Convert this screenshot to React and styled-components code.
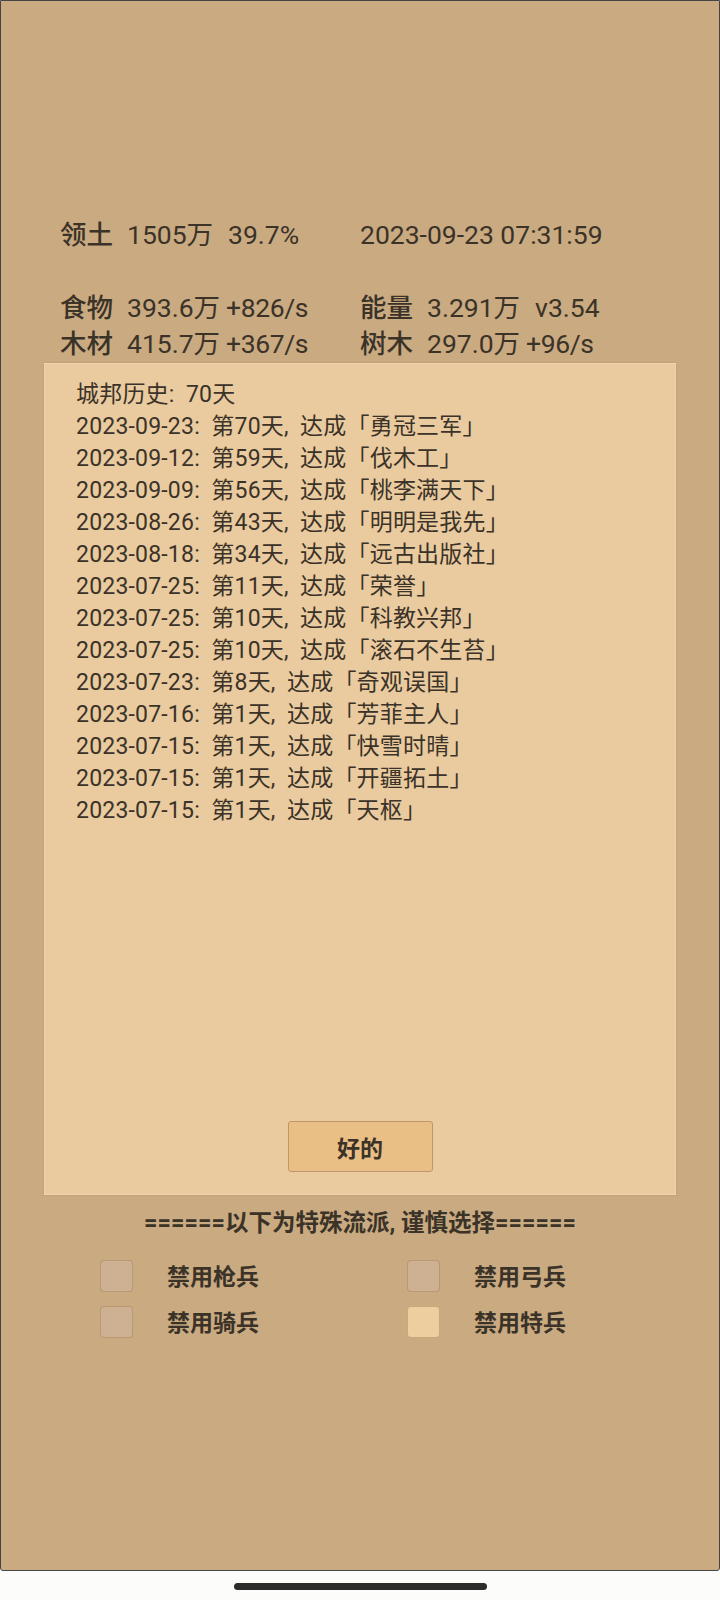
import React, { useState } from "react";
import styled, { createGlobalStyle } from "styled-components";

const GlobalStyle = createGlobalStyle`
  html, body {
    margin: 0;
    padding: 0;
    background: #fcfcfa;
  }
  body {
    font-family: Roboto, "Noto Sans CJK SC", sans-serif;
    color: #3b3228;
  }
  * {
    box-sizing: border-box;
  }
`;

// [label, value, extra, extra is a rate]
const stats = [
  [["领土", "1505万", "39.7%", false], ["2023-09-23 07:31:59"]],
  [
    ["食物", "393.6万", "+826/s", true],
    ["能量", "3.291万", "v3.54", false],
  ],
  [
    ["木材", "415.7万", "+367/s", true],
    ["树木", "297.0万", "+96/s", true],
  ],
];

const history = [
  ["2023-09-23", 70, "勇冠三军"],
  ["2023-09-12", 59, "伐木工"],
  ["2023-09-09", 56, "桃李满天下"],
  ["2023-08-26", 43, "明明是我先"],
  ["2023-08-18", 34, "远古出版社"],
  ["2023-07-25", 11, "荣誉"],
  ["2023-07-25", 10, "科教兴邦"],
  ["2023-07-25", 10, "滚石不生苔"],
  ["2023-07-23", 8, "奇观误国"],
  ["2023-07-16", 1, "芳菲主人"],
  ["2023-07-15", 1, "快雪时晴"],
  ["2023-07-15", 1, "开疆拓土"],
  ["2023-07-15", 1, "天枢"],
];

const options = [
  { id: "spear", label: "禁用枪兵" },
  { id: "bow", label: "禁用弓兵" },
  { id: "horse", label: "禁用骑兵" },
  { id: "special", label: "禁用特兵" },
];

const App = () => {
  const [checked, setChecked] = useState({ special: true });
  const toggle = (id) => setChecked((c) => ({ ...c, [id]: !c[id] }));

  return (
    <>
      <GlobalStyle />
      <Screen>
        <Stats>
          {stats.map((row, i) => (
            <StatRow key={i} $first={i === 0}>
              {row.map((cell, j) => (
                <StatCell key={j}>
                  {cell.length === 1 ? (
                    <span>{cell[0]}</span>
                  ) : (
                    <>
                      <Label>{cell[0]}</Label>
                      <span>{cell[1]}</span>
                      <Extra $rate={cell[3]}>{cell[2]}</Extra>
                    </>
                  )}
                </StatCell>
              ))}
            </StatRow>
          ))}
        </Stats>

        <Panel>
          <Line>城邦历史: 70天</Line>
          {history.map(([date, day, name], i) => (
            <Line key={i}>
              {date}: 第{day}天, 达成「{name}」
            </Line>
          ))}
          <OkButton>好的</OkButton>
        </Panel>

        <Separator>======以下为特殊流派, 谨慎选择======</Separator>

        <Options>
          {options.map((o) => (
            <Option key={o.id} onClick={() => toggle(o.id)}>
              <Box $on={!!checked[o.id]} />
              <OptionLabel>{o.label}</OptionLabel>
            </Option>
          ))}
        </Options>
      </Screen>
      <HomeArea>
        <HomeBar />
      </HomeArea>
    </>
  );
};

export default App;

const Screen = styled.div`
  height: 1571px;
  border: 1px solid #454545;
  border-radius: 0 0 3px 3px;
  background: #c9aa81;
  padding-top: 216px;
`;

const Stats = styled.div`
  padding-left: 59px;
  font-size: 26.5px;
`;

const StatRow = styled.div`
  display: grid;
  grid-template-columns: 300px auto;
  height: 36px;
  line-height: 36px;
  margin-bottom: ${(p) => (p.$first ? "37px" : "0")};
`;

const StatCell = styled.div`
  display: flex;
  white-space: nowrap;
`;

const Label = styled.span`
  font-weight: 500;
  margin-right: 14px;
`;

const Extra = styled.span`
  margin-left: ${(p) => (p.$rate ? "6px" : "15px")};
  letter-spacing: ${(p) => (p.$rate ? "-0.4px" : "0")};
`;

const Panel = styled.div`
  display: flex;
  flex-direction: column;
  width: 632px;
  height: 832px;
  margin: 1px 0 0 43px;
  padding: 15px 0 22px 31px;
  background: #eacb9f;
  border: 1px solid #efd5ac;
  box-shadow: 0 0 2px rgba(90, 60, 20, 0.15);
`;

const Line = styled.div`
  font-size: 23px;
  letter-spacing: 0.2px;
  word-spacing: 5.5px;
  line-height: 32px;
  height: 32px;
  white-space: nowrap;
`;

const OkButton = styled.button`
  margin-top: auto;
  align-self: center;
  margin-left: -31px;
  width: 145px;
  height: 51px;
  background: #e9bf85;
  border: 1px solid #bf9766;
  border-radius: 3px;
  font-family: inherit;
  font-size: 23px;
  font-weight: 700;
  color: #3b3228;
  cursor: pointer;
`;

const Separator = styled.div`
  margin-top: 12px;
  text-align: center;
  font-size: 23.5px;
  font-weight: 700;
  line-height: 32px;
  white-space: nowrap;
`;

const Options = styled.div`
  display: grid;
  grid-template-columns: 307px 307px;
  row-gap: 14px;
  margin-top: 21px;
  padding-left: 99px;
`;

const Option = styled.div`
  display: flex;
  align-items: center;
  height: 32px;
  cursor: pointer;
`;

const Box = styled.div`
  width: 33px;
  height: 32px;
  border-radius: 4px;
  border: 1px solid rgba(160, 125, 80, 0.45);
  background: ${(p) => (p.$on ? "#ecce9f" : "#cdb192")};
`;

const OptionLabel = styled.span`
  margin: 2px 0 0 34px;
  font-size: 23px;
  font-weight: 700;
  line-height: 1;
`;

const HomeArea = styled.div`
  height: 29px;
  padding-top: 12px;
`;

const HomeBar = styled.div`
  width: 253px;
  height: 7px;
  margin: 0 auto;
  border-radius: 4px;
  background: #2c2c2c;
`;
